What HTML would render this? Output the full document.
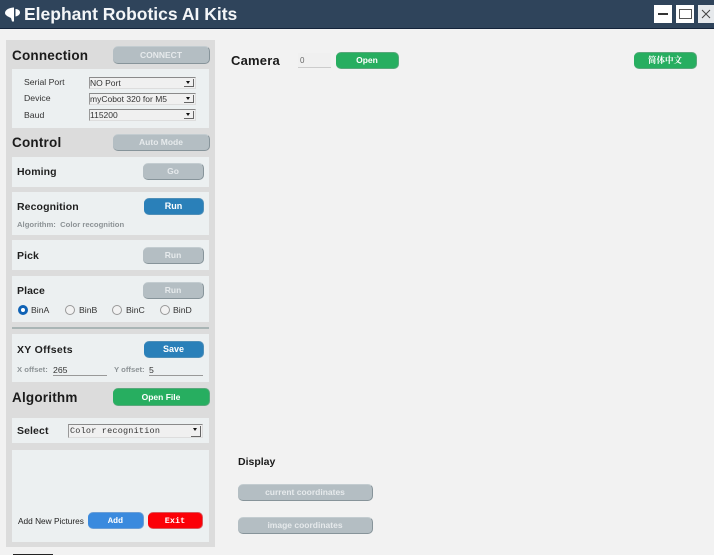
<!DOCTYPE html>
<html><head><meta charset="utf-8">
<style>
html,body{margin:0;padding:0;}
body{width:714px;height:555px;position:relative;overflow:hidden;background:#f2f2f2;font-family:"Liberation Sans","Noto Sans CJK SC",sans-serif;color:#111;}
#w{position:absolute;left:0;top:0;width:714px;height:555px;filter:blur(.35px);}
.a{position:absolute;white-space:nowrap;}
.card{position:absolute;background:#ecf0f1;left:12px;width:197px;}
.h{position:absolute;white-space:nowrap;font-weight:bold;font-size:13.5px;letter-spacing:.2px;color:#1b1b1b;line-height:16px;}
.t{position:absolute;white-space:nowrap;font-weight:bold;font-size:10.5px;color:#1f1f1f;line-height:12px;letter-spacing:.1px;}
.b{position:absolute;box-sizing:border-box;text-align:center;color:#e6eaec;font-weight:bold;font-size:8.5px;border-radius:5px;background:#b4bec3;border-right:1.5px solid #87949a;border-bottom:1.5px solid #87949a;border-top:1px solid #c3ccd0;white-space:nowrap;}
.blue{background:#2a80b9;border-color:#4f8fb8;font-size:9px;color:#fff;}
.green{background:#27ae60;border-color:#5aa87c;color:#fff;}
.s{position:absolute;box-sizing:border-box;left:89px;width:107px;height:12px;background:#f0f0f0;border-top:1px solid #8a8a8a;border-left:1px solid #999;border-right:1px solid #ddd;border-bottom:1px solid #ddd;font-size:8.5px;line-height:10px;color:#333;white-space:nowrap;}
.ar{position:absolute;right:1px;top:1px;width:10px;height:8px;background:#f0f0f0;border-right:1px solid #666;border-bottom:1px solid #666;box-sizing:border-box;}
.ar:after{content:"";position:absolute;left:2px;top:2px;border-left:2.5px solid transparent;border-right:2.5px solid transparent;border-top:3px solid #111;}
.l{position:absolute;font-size:8.7px;line-height:10px;color:#333;white-space:nowrap;}
.r{position:absolute;box-sizing:border-box;width:10px;height:10px;border-radius:50%;border:1px solid #999;background:#f2f2f2;top:305px;}
.g{position:absolute;font-size:7.7px;color:#8d9396;font-weight:bold;white-space:nowrap;line-height:9px;}
</style></head><body><div id="w">

<div class="a" style="left:0;top:0;width:714px;height:28px;background:#2f445b;border-bottom:1px solid #13233a;"></div>
<svg class="a" style="left:0;top:0;" width="24" height="28" viewBox="0 0 24 28"><path d="M14 7.500C9 7.500 5 10 5 13C5 15.500 9 17 11 18L12 21.500L14 21.500Z" fill="#fff"/><path d="M15.500 9C18 9 20 10.500 20 12.500C20 14.500 18 16 15.500 16.500Z" fill="#fff"/></svg>
<div class="a" style="left:24px;top:4px;font-size:17.5px;line-height:21px;font-weight:bold;color:#f4f6f8;">Elephant Robotics AI Kits</div>
<div class="a" style="left:654px;top:5px;width:18px;height:18px;background:#fff;"><div class="a" style="left:4px;top:8px;width:10px;height:2px;background:#333;"></div></div>
<div class="a" style="left:676px;top:5px;width:18px;height:18px;background:#fff;"><div class="a" style="left:3px;top:4px;width:11px;height:8px;border:1px solid #555;"></div></div>
<div class="a" style="left:698px;top:5px;width:16px;height:18px;background:#e6e9ec;"><svg class="a" style="left:3px;top:4px;" width="10" height="10"><path d="M1 1L9 9M9 1L1 9" stroke="#444" stroke-width="1"/></svg></div>

<!-- left panel -->
<div class="a" style="left:6px;top:40px;width:209px;height:507px;background:#dcdcdc;"></div>

<div class="h" style="left:12px;top:48px;">Connection</div>
<div class="b" style="left:113px;top:46px;width:97px;height:18px;line-height:17px;">CONNECT</div>
<div class="card" style="top:69px;height:59px;"></div>
<div class="l" style="left:24px;top:77px;">Serial Port</div>
<div class="l" style="left:24px;top:93px;">Device</div>
<div class="l" style="left:24px;top:110px;">Baud</div>
<div class="s" style="top:77px;">NO Port<div class="ar"></div></div>
<div class="s" style="top:93px;">myCobot 320 for M5<div class="ar"></div></div>
<div class="s" style="top:109px;">115200<div class="ar"></div></div>

<div class="h" style="left:12px;top:135px;">Control</div>
<div class="b" style="left:113px;top:134px;width:97px;height:17px;line-height:15px;">Auto Mode</div>

<div class="card" style="top:157px;height:30px;"></div>
<div class="t" style="left:17px;top:166px;">Homing</div>
<div class="b" style="left:143px;top:163px;width:61px;height:17px;line-height:15px;">Go</div>

<div class="card" style="top:192px;height:43px;"></div>
<div class="t" style="left:17px;top:201px;">Recognition</div>
<div class="b blue" style="left:144px;top:198px;width:60px;height:17px;line-height:15px;">Run</div>
<div class="g" style="left:17px;top:220px;">Algorithm:&nbsp; Color recognition</div>

<div class="card" style="top:240px;height:30px;"></div>
<div class="t" style="left:17px;top:250px;">Pick</div>
<div class="b" style="left:143px;top:247px;width:61px;height:17px;line-height:15px;">Run</div>

<div class="card" style="top:276px;height:46px;"></div>
<div class="t" style="left:17px;top:285px;">Place</div>
<div class="b" style="left:143px;top:282px;width:61px;height:17px;line-height:15px;">Run</div>
<div class="r" style="left:18px;border:3px solid #0f62b5;background:#fff;"></div>
<div class="l" style="left:31px;top:305px;">BinA</div>
<div class="r" style="left:65px;"></div>
<div class="l" style="left:79px;top:305px;">BinB</div>
<div class="r" style="left:112px;"></div>
<div class="l" style="left:126px;top:305px;">BinC</div>
<div class="r" style="left:160px;"></div>
<div class="l" style="left:173px;top:305px;">BinD</div>

<div class="a" style="left:12px;top:327px;width:197px;height:2px;background:#a9b5b5;"></div>

<div class="card" style="top:334px;height:48px;"></div>
<div class="t" style="left:17px;top:344px;letter-spacing:.3px;">XY Offsets</div>
<div class="b blue" style="left:144px;top:341px;width:60px;height:17px;line-height:15px;">Save</div>
<div class="g" style="left:17px;top:365px;">X offset:</div>
<div class="l" style="left:53px;top:365px;width:54px;height:10px;border-bottom:1px solid #999;">265</div>
<div class="g" style="left:114px;top:365px;">Y offset:</div>
<div class="l" style="left:149px;top:365px;width:54px;height:10px;border-bottom:1px solid #999;">5</div>

<div class="h" style="left:12px;top:390px;">Algorithm</div>
<div class="b green" style="left:113px;top:388px;width:97px;height:18px;line-height:16px;">Open File</div>

<div class="card" style="top:418px;height:25px;"></div>
<div class="t" style="left:17px;top:425px;">Select</div>
<div class="s" style="left:68px;top:424px;width:135px;height:14px;font-family:'Liberation Mono',monospace;font-size:8.500px;line-height:12px;letter-spacing:.2px;padding-left:1px;">Color recognition<div class="ar" style="height:11px;"></div></div>

<div class="card" style="top:450px;height:92px;"></div>
<div class="a" style="left:18px;top:516px;font-size:8.300px;line-height:10px;color:#222;">Add New Pictures</div>
<div class="b" style="left:88px;top:512px;width:56px;height:17px;line-height:16px;background:#3a8ade;border-color:#6d9fd6;color:#fff;font-family:'Liberation Mono',monospace;font-size:8.500px;">Add</div>
<div class="b" style="left:148px;top:512px;width:55px;height:17px;line-height:16px;background:#fb0007;border-color:#d65a5f;color:#fff;font-family:'Liberation Mono',monospace;font-size:8.500px;">Exit</div>
<div class="a" style="left:13px;top:554px;width:40px;height:1px;background:#222;"></div>

<!-- right side -->
<div class="a" style="left:231px;top:53px;font-size:13px;line-height:15px;font-weight:bold;color:#1b1b1b;letter-spacing:.2px;">Camera</div>
<div class="a" style="left:298px;top:53px;width:33px;height:14px;background:#f0f0f0;border-bottom:1px solid #ccc;font-size:8px;line-height:15px;color:#666;text-indent:2px;">0</div>
<div class="b green" style="left:336px;top:52px;width:63px;height:17px;line-height:15px;">Open</div>
<div class="b green" style="left:634px;top:52px;width:63px;height:17px;line-height:15px;font-family:'Liberation Serif','Noto Serif CJK SC',serif;">简体中文</div>

<div class="a" style="left:238px;top:456px;font-size:10.500px;line-height:12px;font-weight:bold;color:#1b1b1b;">Display</div>
<div class="b" style="left:238px;top:484px;width:135px;height:17px;line-height:15px;">current coordinates</div>
<div class="b" style="left:238px;top:517px;width:135px;height:17px;line-height:15px;">image coordinates</div>

</div></body></html>
